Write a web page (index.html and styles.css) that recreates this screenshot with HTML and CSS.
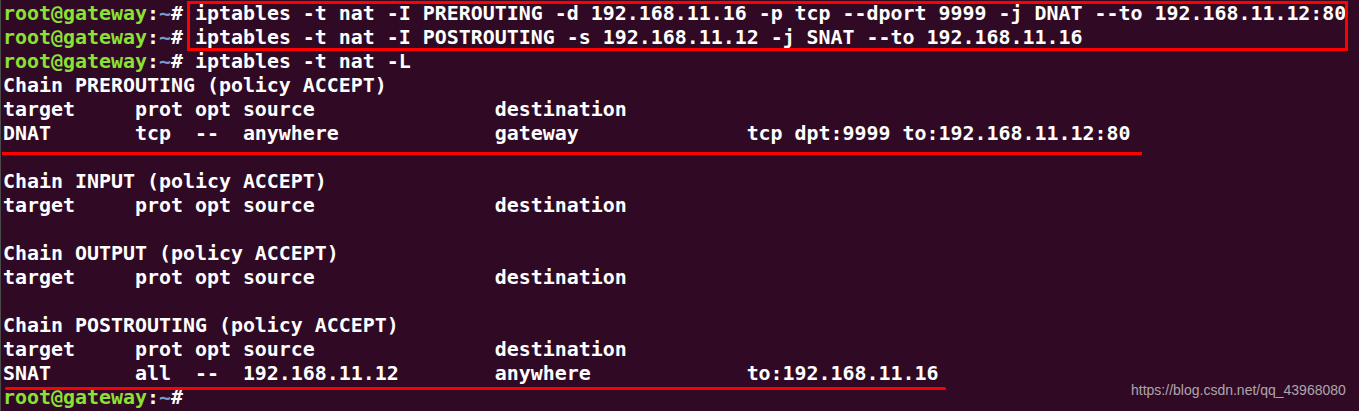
FILE: index.html
```html
<!DOCTYPE html>
<html>
<head>
<meta charset="utf-8">
<link rel="stylesheet" href="styles.css">
</head>
<body>
<div class="term">
<div class="line"><span class="user">root@gateway</span>:<span class="path">~</span># iptables -t nat -I PREROUTING -d 192.168.11.16 -p tcp --dport 9999 -j DNAT --to 192.168.11.12:80</div>
<div class="line"><span class="user">root@gateway</span>:<span class="path">~</span># iptables -t nat -I POSTROUTING -s 192.168.11.12 -j SNAT --to 192.168.11.16</div>
<div class="line"><span class="user">root@gateway</span>:<span class="path">~</span># iptables -t nat -L</div>
<div class="line">Chain PREROUTING (policy ACCEPT)</div>
<div class="line">target     prot opt source               destination         </div>
<div class="line">DNAT       tcp  --  anywhere             gateway              tcp dpt:9999 to:192.168.11.12:80</div>
<div class="line"> </div>
<div class="line">Chain INPUT (policy ACCEPT)</div>
<div class="line">target     prot opt source               destination         </div>
<div class="line"> </div>
<div class="line">Chain OUTPUT (policy ACCEPT)</div>
<div class="line">target     prot opt source               destination         </div>
<div class="line"> </div>
<div class="line">Chain POSTROUTING (policy ACCEPT)</div>
<div class="line">target     prot opt source               destination         </div>
<div class="line">SNAT       all  --  192.168.11.12        anywhere             to:192.168.11.16</div>
<div class="line"><span class="user">root@gateway</span>:<span class="path">~</span># </div>
</div>
<div class="mark box"></div>
<div class="mark u1"></div>
<div class="mark u2"></div>
<div class="watermark">https://blog.csdn.net/qq_43968080</div>
</body>
</html>
```
FILE: styles.css
```css
html, body {
  margin: 0;
  padding: 0;
  background: #300a24;
  height: 100%;
  overflow: hidden;
}
body {
  position: relative;
  border-left: 1px solid #4a4a4a;
  box-sizing: border-box;
}
.term {
  padding: 2px 0 0 2px;
  font-family: "DejaVu Sans Mono", monospace;
  font-weight: bold;
  font-size: 19.93px;
  line-height: 24px;
  color: #ffffff;
}
.line {
  height: 24px;
  white-space: pre;
}
.user {
  color: #8ae234;
}
.path {
  color: #729fcf;
}
.mark {
  position: absolute;
  box-sizing: border-box;
}
.box {
  left: 186px;
  top: 1px;
  width: 1161px;
  height: 50px;
  border: 3px solid #ff0000;
}
.u1 {
  left: 1px;
  top: 152px;
  width: 1140px;
  height: 3px;
  background: #ff0000;
}
.u2 {
  left: 4px;
  top: 387px;
  width: 941px;
  height: 3px;
  background: #ff0000;
  border-radius: 2px;
}
.watermark {
  position: absolute;
  left: 1130px;
  top: 381px;
  font-family: "Liberation Sans", Arial, sans-serif;
  font-size: 14px;
  line-height: 18px;
  color: #c4c0c3;
  opacity: 0.85;
}
```
